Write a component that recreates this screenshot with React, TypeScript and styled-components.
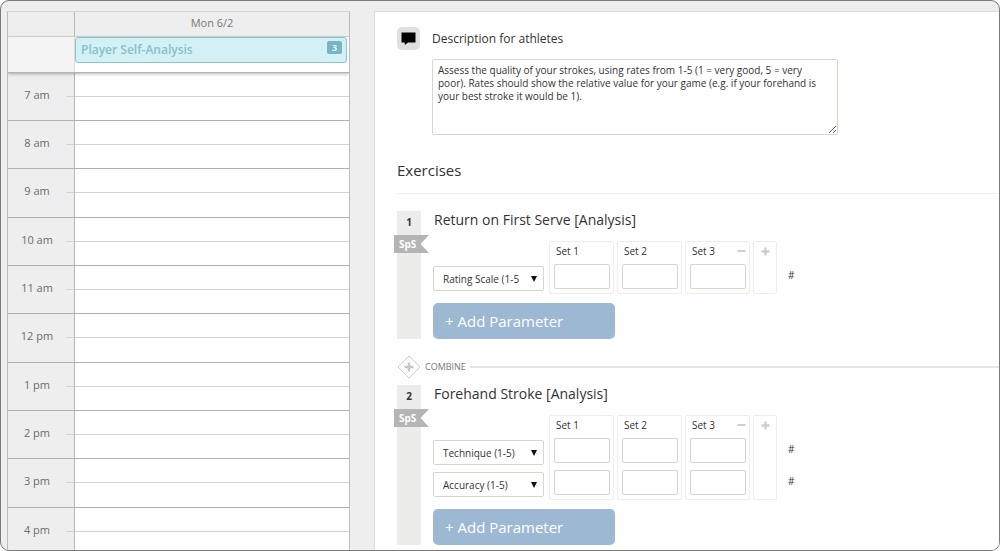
import React from "react";
import styled, { createGlobalStyle } from "styled-components";

const GlobalStyle = createGlobalStyle`
  *, *::before, *::after { box-sizing: border-box; }
  body { margin: 0; background: #fff; }
  body, button, input, select, textarea {
    font-family: "Open Sans", "Liberation Sans", sans-serif;
    color: #333;
  }
`;

const Frame = styled.div`
  display: grid;
  grid-template-columns: minmax(240px, 343fr) minmax(0, 625fr);
  gap: 24px;
  height: 100vh;
  padding: 10px 0 0 6px;
  overflow: hidden;
  background: #eee;
  border: 1px solid #7b7b7b;
  border-radius: 9px;
`;

/* ---------- calendar ---------- */

const Calendar = styled.section`
  display: flex;
  flex-direction: column;
  min-height: 0;
  overflow: hidden;
  border: 1px solid #bcbcbc;
  border-top-color: #d8d8d0;
  border-bottom: 0;
`;

const CalendarRow = styled.div`
  display: grid;
  grid-template-columns: 66px 1fr;
  flex: none;
`;

const DayHeader = styled(CalendarRow)`
  height: 25px;
  border-bottom: 1px solid #d8d8d0;
`;

const DayName = styled.div`
  border-left: 1px solid #b8b8b8;
  font-size: 11px;
  line-height: 22px;
  text-align: center;
  color: #777;
`;

const AllDay = styled(CalendarRow)`
  position: relative;
  height: 36px;
  background: #fff;
  border-bottom: 1px solid #b4b4b4;
  box-shadow: 0 1px 3px rgba(0, 0, 0, 0.3);
`;

const AllDayLabel = styled.div`
  background: #f4f4f4;
`;

const AllDayBody = styled.div`
  padding: 0 2px 0 0;
  border-left: 1px solid #ddd;
`;

const Event = styled.button`
  display: flex;
  justify-content: space-between;
  align-items: flex-start;
  width: 100%;
  height: 26px;
  padding: 3px 4px 0 5px;
  background: #d3f1f5;
  border: 1px solid #8ac6d2;
  border-radius: 3px;
  font-size: 12px;
  font-weight: 600;
  line-height: 17px;
  color: #86c0cc;
`;

const Badge = styled.span`
  width: 15px;
  height: 13px;
  border-radius: 2px;
  background: #77b5c2;
  font-size: 9px;
  font-weight: 700;
  line-height: 13px;
  text-align: center;
  color: #e4f8fa;
`;

const Hours = styled.div`
  flex: 1;
  min-height: 0;
  overflow: hidden;
`;

const Hour = styled(CalendarRow)`
  height: 48px;
  border-bottom: 1px solid #b0b0b0;

  &:nth-child(3n) {
    height: 49px;
  }
`;

const HourLabel = styled.div`
  display: grid;
  grid-template-columns: 1fr 8px;
  font-size: 11px;
  line-height: 44px;
  text-align: center;
  color: #6c6c6c;
`;

const HalfHour = styled.span`
  display: block;
  height: 24px;
  border-bottom: 1px solid #d4d4cc;
`;

const HourSlot = styled.div`
  background: #fff;
  border-left: 1px solid #b8b8b8;
`;

/* ---------- editor ---------- */

const Editor = styled.main`
  min-height: 0;
  padding: 15px 0 0 22px;
  overflow: hidden;
  background: #fff;
  border: 1px solid #dcdcdc;
  border-right: 0;
  border-bottom: 0;
`;

const DescriptionHeader = styled.div`
  display: flex;
  align-items: center;
  gap: 12px;
`;

const IconBox = styled.span`
  display: grid;
  place-items: center;
  width: 23px;
  height: 23px;
  border-radius: 5px;
  background: #e0e0e0;
`;

const DescriptionLabel = styled.label`
  font-size: 12px;
  line-height: 20px;
`;

const Description = styled.textarea`
  display: block;
  width: min(406px, calc(100% - 46px));
  height: 76px;
  margin: 9px 0 0 35px;
  padding: 4px 5px;
  border: 1px solid #d6d6cc;
  border-radius: 2px;
  font-size: 10px;
  line-height: 13px;
  color: #333;
`;

const SectionTitle = styled.h2`
  margin: 24px 0 17px;
  padding-bottom: 12px;
  border-bottom: 1px solid #f0f0f0;
  font-size: 15px;
  font-weight: 400;
  line-height: 22px;
`;

const Exercise = styled.article`
  display: flex;
  gap: 12px;
`;

const Rail = styled.div`
  flex: none;
  width: 24px;
  background: #ececea;
`;

const RailNumber = styled.div`
  height: 24px;
  font-size: 10px;
  font-weight: 700;
  line-height: 22px;
  text-align: center;
`;

const Tag = styled.div`
  width: 35px;
  height: 18px;
  margin-left: -3px;
  padding-left: 5px;
  background: #b5b5b5;
  clip-path: polygon(0 0, 100% 0, 76% 50%, 100% 100%, 0 100%);
  font-size: 10px;
  font-weight: 700;
  line-height: 18px;
  color: #fff;
`;

const ExerciseBody = styled.div`
  flex: 1;
  min-width: 0;
`;

const ExerciseTitle = styled.h3`
  margin: 0;
  padding-left: 1px;
  font-size: 14px;
  font-weight: 400;
  line-height: 18px;
`;

const Parameters = styled.div`
  display: flex;
  align-items: flex-start;
  margin-top: 12px;
`;

const Stack = styled.div`
  display: grid;
  gap: 7px;
`;

const SelectStack = styled(Stack)`
  width: 111px;
  margin: 25px 5px 0 0;
`;

const SelectBox = styled.span`
  display: grid;
  align-items: center;

  > * {
    grid-area: 1 / 1;
  }

  > svg {
    justify-self: end;
    margin-right: 7px;
    pointer-events: none;
  }
`;

const Select = styled.select`
  appearance: none;
  width: 100%;
  height: 25px;
  padding: 0 16px 0 9px;
  background: #fff;
  border: 1px solid #d6d6cc;
  border-radius: 2px;
  font-size: 10px;
  color: #333;
`;

const SetBox = styled.div`
  width: 65px;
  margin-right: 3px;
  padding: 0 3px 4px 4px;
  border: 1px solid #eee;
  border-radius: 2px;
`;

const SetHead = styled.div`
  display: flex;
  align-items: center;
  justify-content: space-between;
  height: 18px;
  margin-bottom: 4px;
  padding-left: 2px;
  font-size: 10px;
  line-height: 18px;
`;

const ScoreInput = styled.input`
  width: 100%;
  height: 25px;
  padding: 0 4px;
  border: 1px solid #d6d6cc;
  border-radius: 2px;
  font-size: 10px;
`;

const GlyphButton = styled.button`
  display: grid;
  padding: 0;
  border: 0;
  background: none;
`;

const AddSet = styled(GlyphButton)`
  align-self: stretch;
  align-content: start;
  justify-content: center;
  width: 24px;
  padding-top: 5px;
  border: 1px solid #eee;
  border-radius: 2px;
`;

const Units = styled(Stack)`
  margin: 22px 0 0 11px;
  font-size: 10px;
  line-height: 25px;
`;

const AddParameter = styled.button`
  display: block;
  width: 182px;
  height: 36px;
  margin-top: 9px;
  padding: 0 12px 1px;
  background: #9cb8d3;
  border: 0;
  border-radius: 5px;
  font-size: 15px;
  font-weight: 500;
  text-align: left;
  color: #fff;
`;

const Combine = styled.div`
  display: flex;
  align-items: center;
  gap: 4px;
  margin: 16px 0 6px;

  &::after {
    content: "";
    flex: 1;
    height: 2px;
    background: #e4e4e4;
  }
`;

const CombineButton = styled.button`
  display: flex;
  align-items: center;
  gap: 4px;
  padding: 0;
  border: 0;
  background: none;
  font-size: 9px;
  line-height: 24px;
  color: #777;
`;

const Plus = () => (
  <svg width="9" height="9" viewBox="0 0 9 9" aria-hidden="true">
    <path d="M4.5 0.5v8M0.5 4.5h8" stroke="#cfcfc6" strokeWidth="2.4" />
  </svg>
);

const Minus = () => (
  <svg width="9" height="9" viewBox="0 0 9 9" aria-hidden="true">
    <path d="M0.5 4h8" stroke="#cfcfc6" strokeWidth="2" />
  </svg>
);

const Diamond = () => (
  <svg width="24" height="24" viewBox="0 0 24 24" aria-hidden="true">
    <path d="M12 1 23 12 12 23 1 12Z" fill="none" stroke="#d2d2c8" />
    <path d="M12 7.5v9M7.5 12h9" stroke="#c8c8c0" strokeWidth="2.4" />
  </svg>
);

const Speech = () => (
  <svg width="15" height="13" viewBox="0 0 15 13" aria-hidden="true">
    <path d="M0.5 0.5h14v10H7L4 13 3.5 10.5h-3Z" fill="#000" />
  </svg>
);

const Arrow = () => (
  <svg width="6" height="6" viewBox="0 0 6 6" aria-hidden="true">
    <path d="M0 0h6L3 6Z" fill="#111" />
  </svg>
);

const hours = ["7 am", "8 am", "9 am", "10 am", "11 am", "12 pm", "1 pm", "2 pm", "3 pm", "4 pm"];
const sets = [1, 2, 3];

type ExerciseProps = { number: number; title: string; parameters: string[] };

const ExerciseItem = ({ number, title, parameters }: ExerciseProps) => (
  <Exercise>
    <Rail>
      <RailNumber>{number}</RailNumber>
      <Tag>SpS</Tag>
    </Rail>
    <ExerciseBody>
      <ExerciseTitle>{title}</ExerciseTitle>
      <Parameters>
        <SelectStack>
          {parameters.map((name) => (
            <SelectBox key={name}>
              <Select aria-label={`Parameter of ${title}`} defaultValue={name}>
                <option>{name}</option>
              </Select>
              <Arrow />
            </SelectBox>
          ))}
        </SelectStack>
        {sets.map((set) => (
          <SetBox key={set}>
            <SetHead>
              <label htmlFor={`score-${number}-${set}-0`}>Set {set}</label>
              {set === sets.length && (
                <GlyphButton aria-label={`Remove set ${set}`}>
                  <Minus />
                </GlyphButton>
              )}
            </SetHead>
            <Stack>
              {parameters.map((name, i) => (
                <ScoreInput
                  key={name}
                  id={`score-${number}-${set}-${i}`}
                  aria-label={`Set ${set}, ${name}`}
                />
              ))}
            </Stack>
          </SetBox>
        ))}
        <AddSet aria-label="Add set">
          <Plus />
        </AddSet>
        <Units>
          {parameters.map((name) => (
            <span key={name}>#</span>
          ))}
        </Units>
      </Parameters>
      <AddParameter>+ Add Parameter</AddParameter>
    </ExerciseBody>
  </Exercise>
);

export default function App() {
  return (
    <>
      <GlobalStyle />
      <Frame>
        <Calendar aria-label="Calendar">
          <DayHeader>
            <span />
            <DayName>Mon 6/2</DayName>
          </DayHeader>
          <AllDay>
            <AllDayLabel />
            <AllDayBody>
              <Event>
                Player Self-Analysis
                <Badge>3</Badge>
              </Event>
            </AllDayBody>
          </AllDay>
          <Hours>
            {hours.map((hour) => (
              <Hour key={hour}>
                <HourLabel>
                  {hour}
                  <HalfHour />
                </HourLabel>
                <HourSlot>
                  <HalfHour />
                </HourSlot>
              </Hour>
            ))}
          </Hours>
        </Calendar>
        <Editor>
          <DescriptionHeader>
            <IconBox>
              <Speech />
            </IconBox>
            <DescriptionLabel htmlFor="description">Description for athletes</DescriptionLabel>
          </DescriptionHeader>
          <Description
            id="description"
            defaultValue="Assess the quality of your strokes, using rates from 1-5 (1 = very good, 5 = very poor). Rates should show the relative value for your game (e.g. if your forehand is your best stroke it would be 1)."
          />
          <SectionTitle>Exercises</SectionTitle>
          <ExerciseItem
            number={1}
            title="Return on First Serve [Analysis]"
            parameters={["Rating Scale (1-5"]}
          />
          <Combine>
            <CombineButton>
              <Diamond />
              COMBINE
            </CombineButton>
          </Combine>
          <ExerciseItem
            number={2}
            title="Forehand Stroke [Analysis]"
            parameters={["Technique (1-5)", "Accuracy (1-5)"]}
          />
        </Editor>
      </Frame>
    </>
  );
}
